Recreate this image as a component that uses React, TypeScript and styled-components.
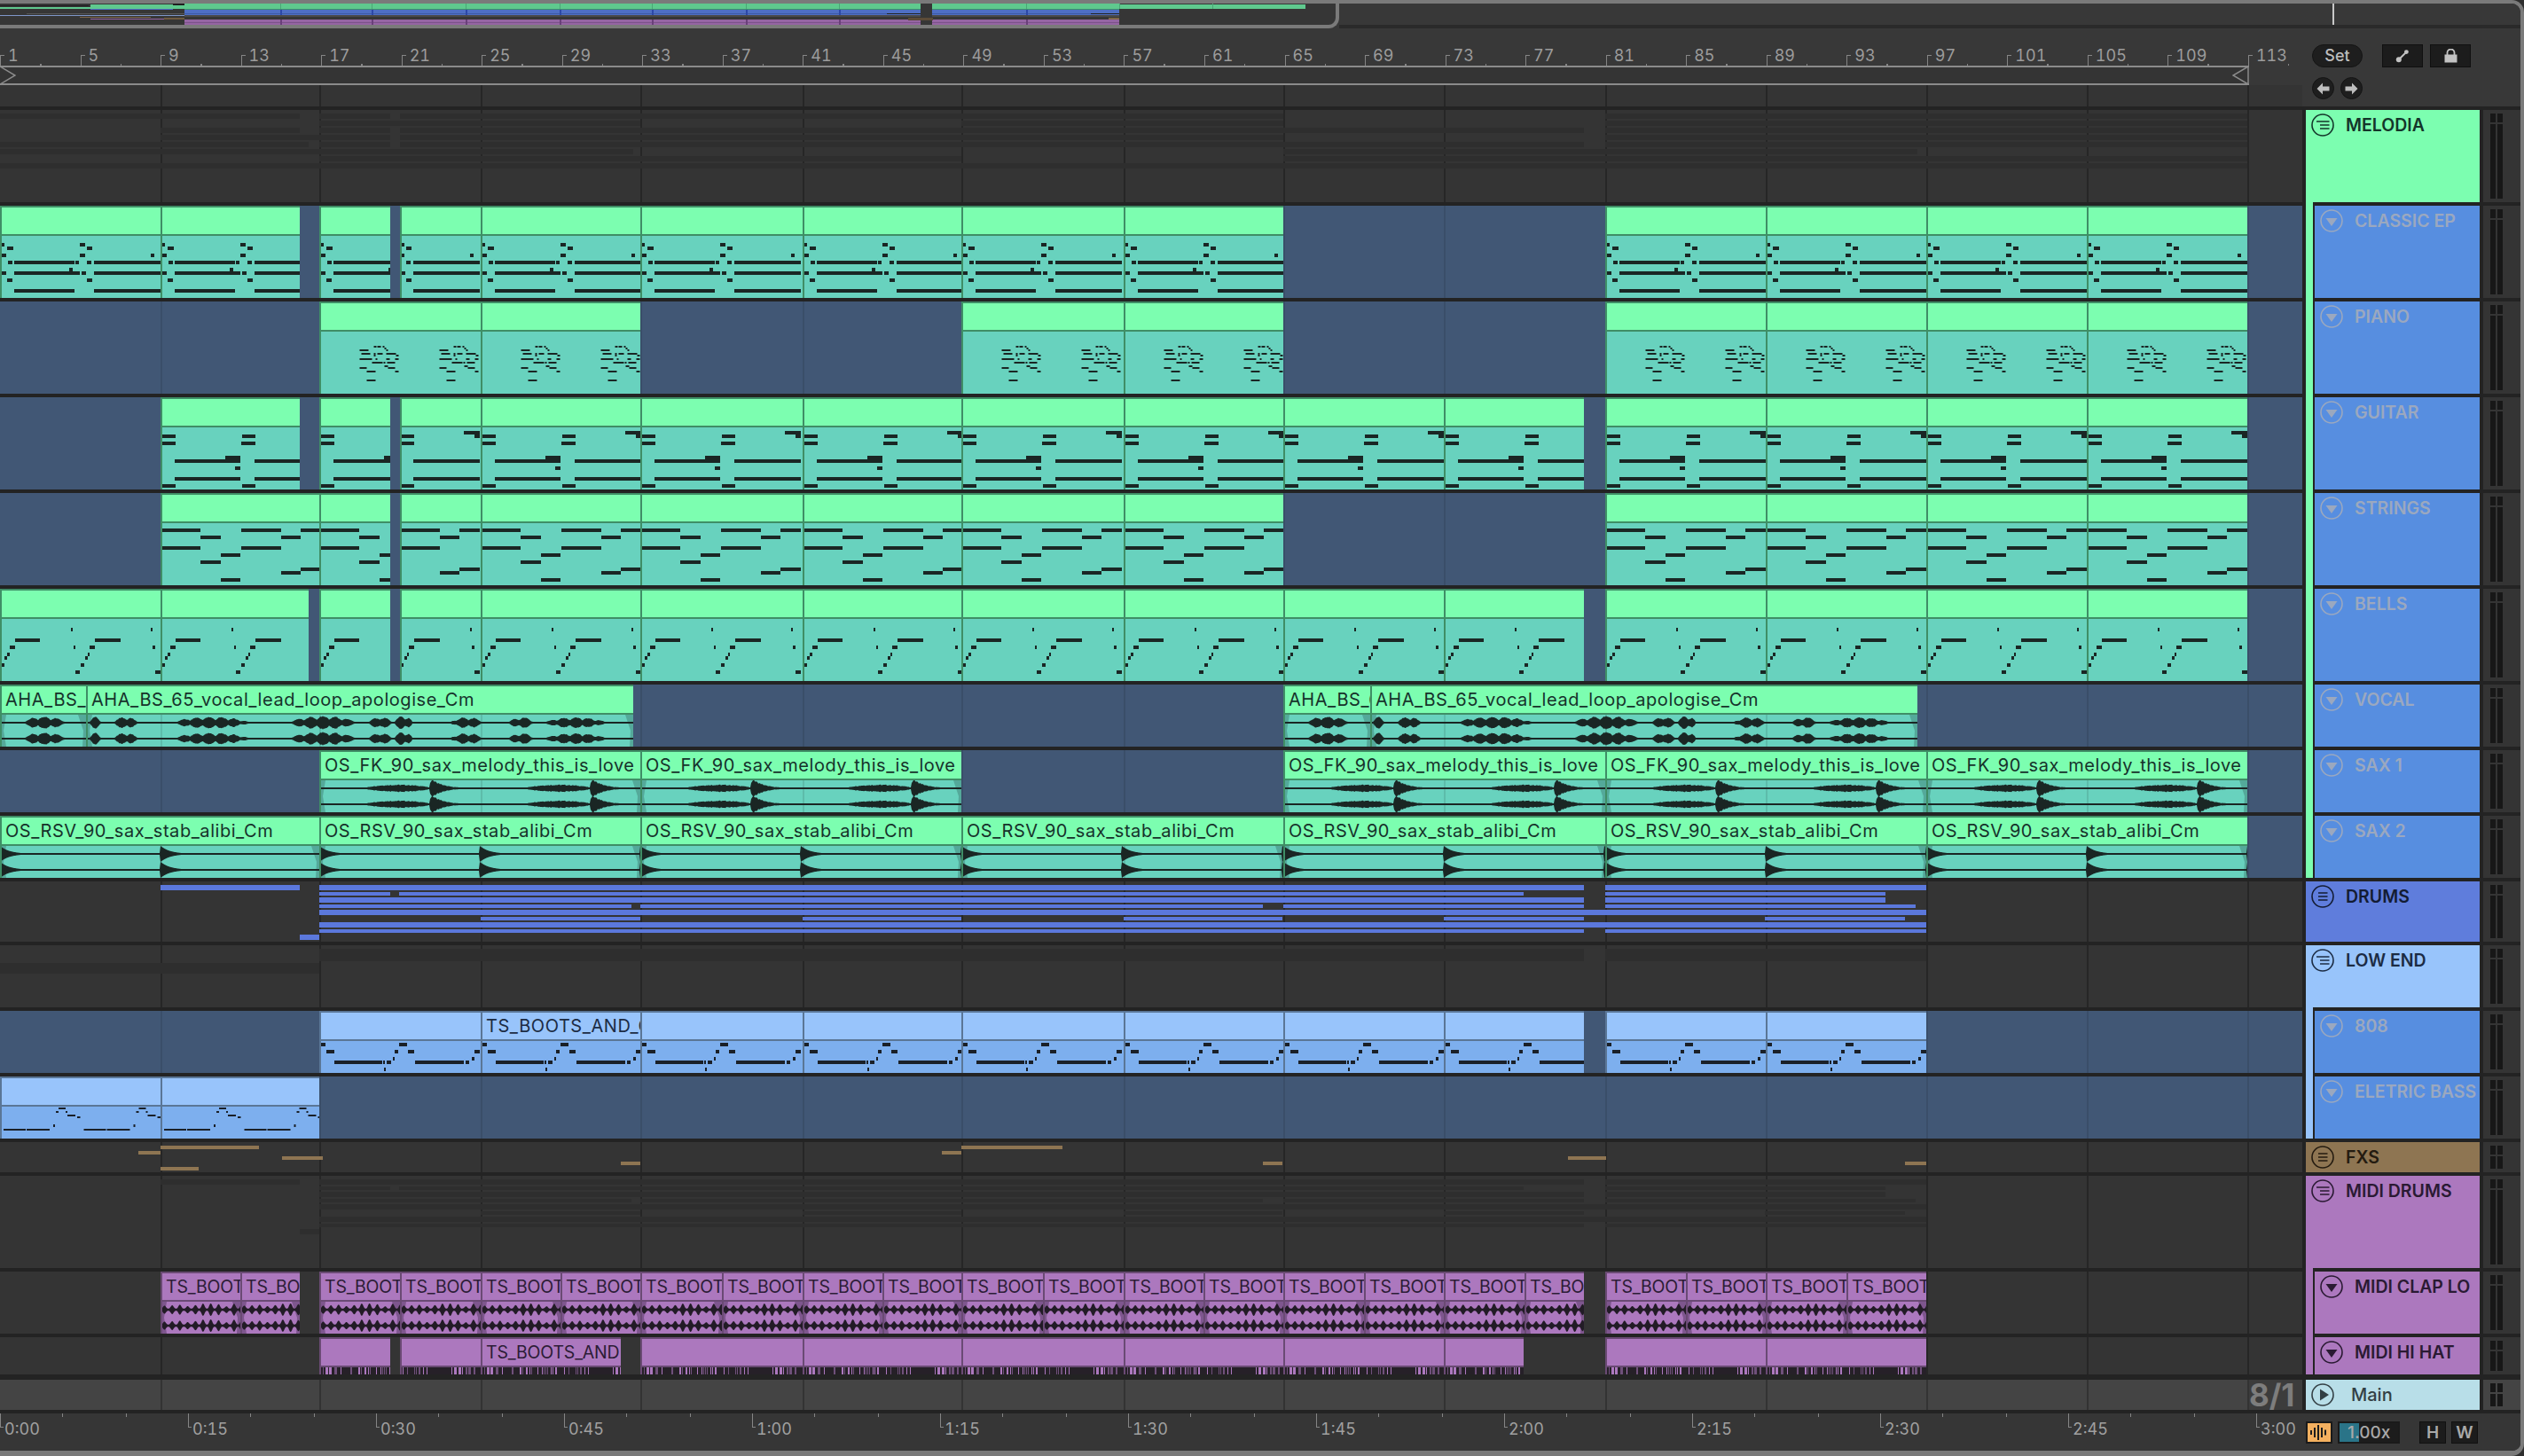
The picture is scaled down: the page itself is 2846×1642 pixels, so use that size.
import styled, { createGlobalStyle } from "styled-components";

//DATA
const GRID = [0, 181, 360, 542, 722, 905, 1084, 1267, 1447, 1628, 1810, 1991, 2172, 2353, 2534];
const GRID_HALF = GRID.slice(0, -1).flatMap((g, i) => [g, Math.round((g + GRID[i + 1]) / 2)]).concat(2534);

type Range = [number, number];
type Note = [number, number, number, number?];
type Clip = { x: number; w: number };

const split = (ranges: Range[], cuts: number[] = GRID): Clip[] =>
  ranges.flatMap(([a, b]) => {
    const marks = [a, ...cuts.filter((c) => c > a && c < b), b];
    return marks.slice(0, -1).map((m, i) => ({ x: m, w: marks[i + 1] - m }));
  });

const originOf = (x: number) => [...GRID].reverse().find((g) => g <= x) ?? 0;
const noise = (i: number) => {
  const s = Math.sin(i * 12.9898) * 43758.5453;
  return s - Math.floor(s);
};

// a label only needs the characters that show inside its clip
const fitLabel = (label: string, w: number) => label.slice(0, Math.ceil((w - 6) / 11.4));

const line = (y: number, pairs: number[], h = 4): Note[] => {
  const out: Note[] = [];
  for (let i = 0; i < pairs.length; i += 2) out.push([y, pairs[i], pairs[i + 1], h]);
  return out;
};

const CLASSIC_NOTES: Note[] = [
  ...line(8, [0, 5, 90, 96]),
  ...line(12, [8, 15, 98, 104]),
  ...line(20, [0, 7, 90, 96, 170, 174]),
  ...line(28, [9, 14, 16, 84, 85, 89, 98, 103, 106, 181]),
  ...line(36, [78, 82]),
  ...line(40, [0, 7, 16, 90, 92, 97, 106, 181]),
  ...line(48, [8, 14, 98, 104]),
  ...line(60, [16, 84, 106, 181]),
];

const PIANO_CLUSTER: Note[] = [
  ...line(16, [16, 19, 20, 24, 26, 28], 2),
  ...line(18, [28, 30], 2),
  ...line(20, [0, 10, 30, 32], 2),
  ...line(24, [2, 12, 16, 18, 20, 26, 30, 41], 2),
  ...line(26, [16, 18, 41, 44], 2),
  ...line(30, [0, 14, 18, 20, 30, 34, 40, 44], 2),
  ...line(34, [14, 26, 27, 29, 31, 40], 2),
  ...line(38, [28, 32], 2),
  ...line(40, [0, 8, 32, 40], 2),
  ...line(44, [8, 18, 40, 44], 2),
  ...line(54, [8, 18], 2),
];
const PIANO_NOTES: Note[] = [45.5, 135.5].flatMap((o) =>
  PIANO_CLUSTER.map(([y, a, b, h]) => [y, a + o, b + o, h] as Note),
);

const GUITAR_NOTES: Note[] = [
  ...line(4, [163, 181]),
  ...line(8, [2, 17, 92, 107, 175, 181]),
  ...line(16, [2, 17, 91, 107]),
  ...line(32, [73, 90], 8),
  ...line(36, [16, 90, 106, 181]),
  ...line(44, [84, 90]),
  ...line(56, [16, 90, 106, 181]),
  ...line(64, [2, 17, 92, 107]),
];

const STRINGS_NOTES: Note[] = [
  ...line(6, [0, 45, 91, 136, 158, 181]),
  ...line(14, [45, 68, 136, 158]),
  ...line(26, [0, 45, 91, 136]),
  ...line(34, [68, 90]),
  ...line(42, [45, 68]),
  ...line(50, [158, 181]),
  ...line(54, [136, 158]),
  ...line(62, [68, 90]),
];

const BELLS_NOTES: Note[] = [
  ...line(10, [80, 82, 170, 172]),
  ...line(22, [17, 45, 107, 136]),
  ...line(30, [11, 17, 83, 85, 101, 107, 172, 175]),
  ...line(38, [8, 11, 99, 101]),
  ...line(42, [5, 8, 96, 99]),
  ...line(50, [1, 5, 91, 95]),
  ...line(58, [85, 90, 175, 181]),
];

const SUB_NOTES: Note[] = [
  ...line(2, [1, 7, 90, 99]),
  ...line(10, [8, 17, 85, 89, 100, 107, 175, 181]),
  ...line(18, [83, 85, 172, 175]),
  ...line(22, [17, 71, 72, 74, 76, 81, 108, 163, 165, 169]),
  ...line(30, [73, 75]),
];

const BASS_NOTES: Note[] = [0, 90.5].flatMap((o) =>
  [
    ...line(1, [66, 74], 2),
    ...line(5, [63, 66, 74, 76], 2),
    ...line(9, [76, 85], 2),
    ...line(11, [87, 90.5], 2),
    ...line(20, [60, 62], 3),
    ...line(25, [4, 29, 30, 56], 2),
  ].map(([y, a, b, h]) => [y, a + o, b + o, h] as Note),
);

const CLASSIC_R: Range[] = [[0, 338], [360, 440], [451, 1447], [1810, 2534]];
const PIANO_R: Range[] = [[360, 722], [1084, 1447], [1810, 2534]];
const GUITAR_R: Range[] = [[181, 338], [360, 440], [451, 1786], [1810, 2534]];
const STRINGS_R: Range[] = [[181, 440], [451, 1447], [1810, 2534]];
const BELLS_R: Range[] = [[0, 348], [360, 440], [451, 1786], [1810, 2534]];
const VOCAL_R: Range[] = [[0, 714], [1447, 2162]];
const SAX1_R: Range[] = [[360, 1084], [1447, 2534]];
const SAX2_R: Range[] = [[0, 2534]];
const SUB_R: Range[] = [[360, 1786], [1810, 2172]];
const BASS_R: Range[] = [[0, 360]];

const DRUM_ROWS: [number, number, Range[]][] = [
  [4, 6, [[181, 338], [360, 1786], [1810, 2172]]],
  [12, 4, [[360, 440], [450, 1718], [1810, 2126]]],
  [18, 6, [[360, 1786], [1810, 2126]]],
  [26, 4, [[360, 712], [722, 1424], [1447, 1786], [1810, 2160]]],
  [32, 6, [[360, 2172]]],
  [40, 4, [[542, 722], [905, 1084], [1267, 1446], [1628, 1786], [1990, 2148]]],
  [46, 6, [[360, 2172]]],
  [54, 4, [[360, 1786], [1810, 2172]]],
  [60, 6, [[338, 360]]],
];

const MELODIA_ROWS: [number, number, Range[]][] = [
  [4, 6, CLASSIC_R],
  [12, 6, PIANO_R],
  [20, 6, GUITAR_R],
  [28, 6, STRINGS_R],
  [36, 6, BELLS_R],
  [44, 6, VOCAL_R],
  [52, 6, SAX1_R],
  [60, 6, SAX2_R],
];

const LOW_END_ROWS: [number, number, Range[]][] = [
  [4, 14, SUB_R],
  [20, 12, BASS_R],
];

const FX_ROWS: [number, number, Range[]][] = [
  [4, 4, [[181, 292], [1084, 1198]]],
  [10, 4, [[156, 181], [1062, 1084]]],
  [16, 4, [[318, 364], [1768, 1811]]],
  [22, 4, [[700, 722], [1424, 1446], [2148, 2172]]],
  [28, 4, [[181, 224]]],
];

const GREEN = { title: "#7cfeb0", body: "#68d2be", edge: "#3f8e66", ink: "#16322b", wave: "#1a2624", fade: "rgba(60,120,110,.45)" };
const BLUE = { title: "#98c4fb", body: "#7dafee", edge: "#5a7696", ink: "#1c2c44", wave: "#1a2028", fade: "rgba(60,90,130,.4)" };
const PURPLE = { title: "#ac78be", body: "#ac78be", edge: "#6a4a74", ink: "#2c1c36", wave: "#221b26", fade: "rgba(70,45,85,.45)" };

const VOCAL_BURSTS: [number, number, number][] = [
  [26, 75, 7.5], [101, 114, 7], [128, 155, 7], [195, 281, 7], [327, 402, 8], [416, 442, 7],
  [445, 465, 8.5], [508, 545, 6.5], [574, 602, 6.5], [614, 683, 6.5],
];
const vocalAmp = (x: number) => {
  for (const [a, b, p] of VOCAL_BURSTS) {
    if (x >= a && x <= b) {
      const t = (x - a) / (b - a);
      const pulse = 0.45 + 0.55 * Math.abs(Math.sin(x * 0.22));
      return Math.max(1, p * Math.pow(Math.sin(Math.PI * t), 0.6) * pulse * (0.8 + 0.2 * noise(Math.floor(x))));
    }
  }
  return 1;
};
const saxMelodyAmp = (x: number) => {
  const r = x % 181;
  if (r >= 52 && r < 125) return Math.max(1, 4.4 * Math.pow(Math.sin((Math.PI * (r - 52)) / 73), 0.5) * (0.7 + 0.3 * noise(Math.floor(r))));
  if (r >= 125 && r < 170) return Math.max(1, 8.8 * Math.exp(-(r - 130) / 13) * (0.75 + 0.25 * noise(Math.floor(r))) * Math.min(1, (r - 123) / 4));
  return 1;
};
const stabAmp = (x: number) => Math.max(1, 9 * Math.exp(-(x % 181) / 11));
const clapAmp = (x: number) => {
  const phase = x * 0.36;
  const spike = Math.pow(Math.abs(Math.sin(phase)), 3);
  const height = 0.35 + 0.65 * noise(Math.floor(phase / Math.PI) + 4);
  const swell = 1 + 0.5 * Math.exp(-Math.pow((x - 46) / 7, 2));
  return Math.max(1.2, 1.2 + 6.4 * spike * height * swell * (0.85 + 0.15 * noise(Math.floor(x))));
};

const STRIPES: Note[] = (() => {
  const out: Note[] = [];
  let x = 0;
  while (x < 181) {
    const w = 1 + Math.floor(noise(x + 3) * 3);
    if (noise(x * 2 + 7) > 0.42) out.push([0, x, x + w, noise(x + 11) > 0.5 ? 1 : 0.55]);
    x += w + 1 + Math.floor(noise(x + 5) * 3);
  }
  return out;
})();

//DRAWINGS
const NoteRoll = ({ clip, height, notes, color }: { clip: Clip; height: number; notes: Note[]; color: string }) => {
  const shift = clip.x + 2 - originOf(clip.x);
  return (
    <svg width={clip.w - 2} height={height} style={{ display: "block" }}>
      <g transform={`translate(${-shift} 0)`} fill={color}>
        {notes.map(([y, a, b, h], i) => (
          <rect key={i} x={a} y={y} width={b - a} height={h ?? 4} />
        ))}
      </g>
    </svg>
  );
};

const Waveform = ({
  clip,
  origin,
  amp,
  wave,
  fade,
}: {
  clip: Clip;
  origin: number;
  amp: (x: number) => number;
  wave: string;
  fade: string;
}) => {
  const w = clip.w - 2;
  const h = 36;
  const shift = clip.x + 2 - origin;
  const channel = (c: number) => {
    let top = "";
    let bottom = "";
    for (let x = 0; x <= w; x += 1) {
      const a = amp(x + shift);
      top += `${x === 0 ? "M" : "L"}${x} ${(c - a).toFixed(1)}`;
      bottom = `L${x} ${(c + a).toFixed(1)}` + bottom;
    }
    return top + bottom + "Z";
  };
  return (
    <svg width={w} height={h} style={{ display: "block" }}>
      <path d={`M0 0L5 0L2 18L5 36L0 36Z M${w - 9} 0L${w} 0L${w} 36L${w - 4} 36L${w - 3} 18Z`} fill={fade} />
      {GRID.filter((g) => g > clip.x + 2 && g < clip.x + clip.w).map((g) => (
        <rect key={g} x={g - clip.x - 2} y={0} width={2} height={h} fill="rgba(0,0,0,.1)" />
      ))}
      <path d={channel(9) + channel(27)} fill={wave} />
    </svg>
  );
};

const Barcode = ({ clip }: { clip: Clip }) => {
  const shift = clip.x + 2 - originOf(clip.x);
  return (
    <svg width={clip.w - 2} height={8} style={{ display: "block" }}>
      <rect width={clip.w} height={8} fill="#262028" />
      <g transform={`translate(${-shift} 0)`} fill="#ac78be">
        {STRIPES.map(([, a, b, o], i) => (
          <rect key={i} x={a} width={b - a} height={8} opacity={o} />
        ))}
      </g>
    </svg>
  );
};

const FoldIcon = ({ open }: { open?: boolean }) => (
  <IconSvg viewBox="0 0 26 26">
    <circle cx="13" cy="13" r="12" fill="none" stroke="currentColor" strokeWidth="1.6" />
    {open ? (
      <path d="M6 9H20.5M10 13H20.5M10 17H20.5" stroke="currentColor" strokeWidth="1.6" />
    ) : (
      <path d="M8 9H18.5M8 13H18.5M8 17H18.5" stroke="currentColor" strokeWidth="1.6" />
    )}
  </IconSvg>
);

const ArmIcon = () => (
  <IconSvg viewBox="0 0 26 26">
    <circle cx="13" cy="13" r="12" fill="none" stroke="currentColor" strokeWidth="1.6" />
    <path d="M6.5 10H19.5L13 19Z" fill="currentColor" />
  </IconSvg>
);

const PlayIcon = () => (
  <IconSvg viewBox="0 0 26 26">
    <circle cx="13" cy="13" r="12" fill="none" stroke="currentColor" strokeWidth="1.6" />
    <path d="M10 6.5V19.5L20 13Z" fill="currentColor" />
  </IconSvg>
);

const ArrowIcon = ({ right }: { right?: boolean }) => (
  <svg width="15" height="14" viewBox="0 0 15 14" style={{ transform: right ? "scaleX(-1)" : undefined }}>
    <path d="M7 0.5L0.5 7L7 13.5V9.5H14.5V4.5H7Z" fill="#bdbdbd" />
  </svg>
);

const OverviewMap = () => {
  const main: Range[] = [[208, 1038], [1051, 1262]];
  const ticks = [316, 419, 525, 631, 735, 841, 946, 1157];
  return (
    <svg width="1506" height="24" style={{ display: "block" }}>
      <rect x="0" y="2" width="100" height="1" fill="#1f1f1f" />
      <rect x="0" y="4" width="102" height="2" fill="#5fc98e" />
      <rect x="102" y="1" width="106" height="5" fill="#5fc98e" />
      <rect x="102" y="6" width="93" height="1" fill="#5070c8" />
      <rect x="195" y="0" width="13" height="2" fill="#1f1f1f" />
      <rect x="0" y="13" width="208" height="1" fill="#7f97c9" />
      <rect x="30" y="11" width="178" height="1" fill="#555" />
      <rect x="90" y="15" width="80" height="1" fill="#7d6648" />
      <rect x="102" y="17" width="93" height="1" fill="#9565a3" />
      <rect x="185" y="16" width="23" height="2" fill="#6e5a40" />
      <rect x="1262" y="1" width="210" height="5" fill="#5fc98e" />
      {main.map(([a, b]) => (
        <g key={a}>
          <rect x={a} y="0" width={b - a} height="6" fill="#5fc98e" />
          <rect x={a} y="6" width={b - a} height="1" fill="#3f8e6c" />
          <rect x={a} y="7" width={b - a} height="6" fill="#4e6fc4" />
          <rect x={a} y="11" width={b - a} height="1" fill="#3d5aa6" />
          <rect x={a} y="13" width={b - a} height="2" fill="#4a4a4a" />
          <rect x={a} y="18" width={b - a} height="6" fill="#9565a3" />
          <rect x={a} y="21" width={b - a} height="1" fill="#7a5389" />
        </g>
      ))}
      {ticks.map((t) => (
        <g key={t}>
          <rect x={t} y="0" width="1" height="6" fill="#4aa676" />
          <rect x={t} y="7" width="2" height="6" fill="#2c48a8" />
          <rect x={t} y="18" width="2" height="6" fill="#6a3f7a" />
        </g>
      ))}
      <rect x="1262" y="0" width="1" height="6" fill="#4aa676" />
      <rect x="1367" y="0" width="1" height="6" fill="#4aa676" />
      <rect x="1000" y="11" width="38" height="1" fill="#222" />
      <rect x="1230" y="11" width="32" height="1" fill="#222" />
      <rect x="1024" y="16" width="28" height="3" fill="#5c4b38" />
      <rect x="1250" y="16" width="12" height="2" fill="#7d6648" />
    </svg>
  );
};

//REACT
const Lane = ({
  height,
  tone = "dark",
  rows,
  barColor,
  children,
}: {
  height: number;
  tone?: "dark" | "blue" | "main";
  rows?: [number, number, Range[]][];
  barColor?: string;
  children?: React.ReactNode;
}) => (
  <LaneBox $height={height} $tone={tone}>
    {GRID.slice(1).map((g) => (
      <GridLine key={g} $x={g} $tone={tone} />
    ))}
    {rows?.flatMap(([top, h, ranges]) =>
      ranges.map(([a, b]) => <SummaryBar key={`${top}-${a}`} $x={a} $w={b - a} $top={top} $h={h} $color={barColor ?? "#2e2e2e"} />),
    )}
    {children}
  </LaneBox>
);

const MidiLane = ({ ranges, notes, palette = GREEN, bodyHeight = 70, cuts, labels }: any) => (
  <>
    {split(ranges, cuts).map((clip: Clip) => (
      <ClipBox key={clip.x} $x={clip.x} $w={clip.w} $edge={palette.edge}>
        <ClipTitle $bg={palette.title} $edge={palette.edge} $ink={palette.ink}>
          {labels?.[clip.x] ? fitLabel(labels[clip.x], clip.w) : null}
        </ClipTitle>
        <ClipBody $bg={palette.body}>
          <NoteRoll clip={clip} height={bodyHeight} notes={notes} color={palette.wave} />
        </ClipBody>
      </ClipBox>
    ))}
  </>
);

const AudioLane = ({ clips, label, amp, palette = GREEN, local, setOrigins }: any) => (
  <>
    {clips.map((clip: Clip) => {
      const origin = setOrigins ? setOrigins(clip) : local ? clip.x : originOf(clip.x);
      return (
        <ClipBox key={clip.x} $x={clip.x} $w={clip.w} $edge={palette.edge}>
          <ClipTitle $bg={palette.title} $edge={palette.edge} $ink={palette.ink} $tight={local}>
            {fitLabel(label, clip.w)}
          </ClipTitle>
          <ClipBody $bg={palette.body}>
            <Waveform clip={clip} origin={origin} amp={amp} wave={palette.wave} fade={palette.fade} />
          </ClipBody>
        </ClipBox>
      );
    })}
  </>
);

const HEADER_INK = { green: "#14352a", blue: "#9ba8bf", drums: "#131c33", low: "#1c2c44", fx: "#241b10", midi: "#2a1a33" };

const TrackHeader = ({ name, color, ink, height, fold, openFold }: any) => (
  <HeaderRow $bg={color} $ink={ink} $height={height}>
    {fold ? <FoldIcon open={openFold} /> : <ArmIcon />}
    <TrackName>{name}</TrackName>
  </HeaderRow>
);

const ChildTrack = ({ name, color, ink, height }: any) => (
  <ChildRow $bg={color} $ink={ink} $height={height + 4}>
    <ArmIcon />
    <TrackName>{name}</TrackName>
  </ChildRow>
);

const METER_HEIGHTS = [104, 104, 104, 104, 104, 104, 70, 70, 70, 68, 70, 70, 70, 34, 104, 70, 42];

const App = () => {
  const barLabels = Array.from({ length: 29 }, (_, i) => i * 4 + 1);
  const times = Array.from({ length: 13 }, (_, i) => `${Math.floor((i * 15) / 60)}:${String((i * 15) % 60).padStart(2, "0")}`);
  const vocalClips: Clip[] = [
    { x: 0, w: 97 },
    { x: 97, w: 617 },
    { x: 1447, w: 98 },
    { x: 1545, w: 617 },
  ];
  const sax1Clips: Clip[] = [
    { x: 360, w: 362 },
    { x: 722, w: 362 },
    { x: 1447, w: 363 },
    { x: 1810, w: 362 },
    { x: 2172, w: 362 },
  ];
  const sax2Clips: Clip[] = [
    { x: 0, w: 360 },
    { x: 360, w: 362 },
    { x: 722, w: 362 },
    { x: 1084, w: 363 },
    { x: 1447, w: 363 },
    { x: 1810, w: 362 },
    { x: 2172, w: 362 },
  ];
  const clapClips = split([[181, 338], [360, 1786], [1810, 2172]], GRID_HALF);
  const hatClips = split([[360, 440], [451, 700], [722, 1718], [1810, 2172]]);

  return (
    <>
      <GlobalStyle />
      <Window>
        <TopStrip>
          <OverviewFrame>
            <OverviewMap />
          </OverviewFrame>
          <TopRest>
            <Playhead />
          </TopRest>
        </TopStrip>

        <RulerBar>
          <RulerColumn>
            <BarRow>
              {barLabels.map((b) => (
                <BarCell key={b}>{b}</BarCell>
              ))}
            </BarRow>
            <LoopBrace>
              <svg width="18" height="20" style={{ display: "block" }}>
                <path d="M0 0L17 10L0 20" fill="none" stroke="#8b8b8b" strokeWidth="1.5" />
              </svg>
              <svg width="19" height="20" style={{ display: "block" }}>
                <path d="M18 0L1 10L18 20Z" fill="none" stroke="#8b8b8b" strokeWidth="1.5" />
              </svg>
            </LoopBrace>
            <RulerStub>
              {GRID.slice(1).map((g) => (
                <GridLine key={g} $x={g} $tone="dark" />
              ))}
            </RulerStub>
          </RulerColumn>
          <ControlColumn>
            <ControlRow>
              <SetPill>Set</SetPill>
              <SquareGroup>
                <SquareButton>
                  <svg width="16" height="16" viewBox="0 0 16 16">
                    <path d="M4 12L12 4" stroke="#c2c2c2" strokeWidth="2" />
                    <circle cx="3.8" cy="12.2" r="3" fill="#c2c2c2" />
                    <circle cx="12.4" cy="3.6" r="2.4" fill="#c2c2c2" />
                  </svg>
                </SquareButton>
                <SquareButton>
                  <svg width="15" height="16" viewBox="0 0 15 16">
                    <path d="M3.5 7V4.5a4 4 0 0 1 8 0V7" fill="none" stroke="#c2c2c2" strokeWidth="1.8" />
                    <rect x="0.5" y="6.5" width="14" height="9" fill="#c2c2c2" />
                  </svg>
                </SquareButton>
              </SquareGroup>
            </ControlRow>
            <ControlRow>
              <ArrowButton>
                <ArrowIcon />
              </ArrowButton>
              <ArrowButton>
                <ArrowIcon right />
              </ArrowButton>
            </ControlRow>
          </ControlColumn>
        </RulerBar>

        <TrackArea>
          <LaneColumn>
            <Lane height={104} rows={MELODIA_ROWS} />
            <Lane height={104} tone="blue">
              <MidiLane ranges={CLASSIC_R} notes={CLASSIC_NOTES} />
            </Lane>
            <Lane height={104} tone="blue">
              <MidiLane ranges={PIANO_R} notes={PIANO_NOTES} />
            </Lane>
            <Lane height={104} tone="blue">
              <MidiLane ranges={GUITAR_R} notes={GUITAR_NOTES} />
            </Lane>
            <Lane height={104} tone="blue">
              <MidiLane ranges={STRINGS_R} notes={STRINGS_NOTES} />
            </Lane>
            <Lane height={104} tone="blue">
              <MidiLane ranges={BELLS_R} notes={BELLS_NOTES} />
            </Lane>
            <Lane height={70} tone="blue">
              <AudioLane
                clips={vocalClips}
                label="AHA_BS_65_vocal_lead_loop_apologise_Cm"
                amp={vocalAmp}
                setOrigins={(c: Clip) => (c.x < 1000 ? 0 : 1447)}
              />
            </Lane>
            <Lane height={70} tone="blue">
              <AudioLane clips={sax1Clips} label="OS_FK_90_sax_melody_this_is_love_Cm" amp={saxMelodyAmp} />
            </Lane>
            <Lane height={70} tone="blue">
              <AudioLane clips={sax2Clips} label="OS_RSV_90_sax_stab_alibi_Cm" amp={stabAmp} />
            </Lane>
            <Lane height={68} rows={DRUM_ROWS} barColor="#5b78dc" />
            <Lane height={70} rows={LOW_END_ROWS} />
            <Lane height={70} tone="blue">
              <MidiLane ranges={SUB_R} notes={SUB_NOTES} palette={BLUE} bodyHeight={36} labels={{ 542: "TS_BOOTS_AND_CATS" }} />
            </Lane>
            <Lane height={70} tone="blue">
              <MidiLane ranges={BASS_R} notes={BASS_NOTES} palette={BLUE} bodyHeight={36} />
            </Lane>
            <Lane height={34} rows={FX_ROWS} barColor="#8e7552" />
            <Lane height={104} rows={DRUM_ROWS} />
            <Lane height={70}>
              <AudioLane clips={clapClips} label="TS_BOOTS_AND_CATS_clap" amp={clapAmp} palette={PURPLE} local />
            </Lane>
            <Lane height={42}>
              {hatClips.map((clip) => (
                <ClipBox key={clip.x} $x={clip.x} $w={clip.w} $edge={PURPLE.edge}>
                  <ClipTitle $bg={PURPLE.title} $edge={PURPLE.edge} $ink={PURPLE.ink} $tight>
                    {clip.x === 542 ? "TS_BOOTS_AND" : ""}
                  </ClipTitle>
                  <Barcode clip={clip} />
                </ClipBox>
              ))}
            </Lane>
            <MainGap />
            <Lane height={34} tone="main">
              <BeatBox>8/1</BeatBox>
            </Lane>
          </LaneColumn>

          <HeaderColumn>
            <FolderGroup $bg="#7cfeb0">
              <TrackHeader name="MELODIA" color="#7cfeb0" ink={HEADER_INK.green} height={104} fold openFold />
              <FolderChildren>
                {["CLASSIC EP", "PIANO", "GUITAR", "STRINGS", "BELLS"].map((n) => (
                  <ChildTrack key={n} name={n} color="#578ee0" ink={HEADER_INK.blue} height={104} />
                ))}
                {["VOCAL", "SAX 1", "SAX 2"].map((n) => (
                  <ChildTrack key={n} name={n} color="#578ee0" ink={HEADER_INK.blue} height={70} />
                ))}
              </FolderChildren>
            </FolderGroup>
            <TrackHeader name="DRUMS" color="#5f7ddc" ink={HEADER_INK.drums} height={68} fold />
            <FolderGroup $bg="#98c4fb">
              <TrackHeader name="LOW END" color="#98c4fb" ink={HEADER_INK.low} height={70} fold openFold />
              <FolderChildren>
                <ChildTrack name="808" color="#578ee0" ink={HEADER_INK.blue} height={70} />
                <ChildTrack name="ELETRIC BASS" color="#578ee0" ink={HEADER_INK.blue} height={70} />
              </FolderChildren>
            </FolderGroup>
            <TrackHeader name="FXS" color="#8e7552" ink={HEADER_INK.fx} height={34} fold />
            <FolderGroup $bg="#ac78be">
              <TrackHeader name="MIDI DRUMS" color="#ac78be" ink={HEADER_INK.midi} height={104} fold openFold />
              <FolderChildren>
                <ChildTrack name="MIDI CLAP LO" color="#ac78be" ink={HEADER_INK.midi} height={70} />
                <ChildTrack name="MIDI HI HAT" color="#ac78be" ink={HEADER_INK.midi} height={42} />
              </FolderChildren>
            </FolderGroup>
            <MainGap />
            <MainHeader>
              <PlayIcon />
              <MainName>Main</MainName>
            </MainHeader>
          </HeaderColumn>

          <MeterColumn>
            {METER_HEIGHTS.map((h, i) => (
              <MeterCell key={i} $height={h}>
                <MeterBar>
                  <MeterCap />
                  <MeterFill />
                </MeterBar>
                <MeterBar>
                  <MeterCap />
                  <MeterFill />
                </MeterBar>
              </MeterCell>
            ))}
            <MainGap />
            <MeterCell $height={34} $main>
              <MeterBar>
                <MeterCap />
                <MeterFill />
              </MeterBar>
              <MeterBar>
                <MeterCap />
                <MeterFill />
              </MeterBar>
            </MeterCell>
          </MeterColumn>
        </TrackArea>

        <Footer>
          <TimeRow>
            {times.map((t) => (
              <TimeCell key={t}>{t}</TimeCell>
            ))}
          </TimeRow>
          <FooterControls>
            <FollowButton>
              <svg width="22" height="17" viewBox="0 0 22 17">
                <path d="M2 6V11M6 3V14M10 0V17M14 3V14M18 5.5V11.5" stroke="#1d1d1d" strokeWidth="2" />
              </svg>
            </FollowButton>
            <ZoomField>1.00x</ZoomField>
            <LetterGroup>
              <LetterButton>H</LetterButton>
              <LetterButton>W</LetterButton>
            </LetterGroup>
          </FooterControls>
        </Footer>
      </Window>
    </>
  );
};

//STYLED-COMPONENTS
const GlobalStyle = createGlobalStyle`
  html, body {
    margin: 0;
    padding: 0;
    background: #2e2e2e;
  }
  * {
    box-sizing: border-box;
  }
`;

const Window = styled.div`
  width: 2846px;
  height: 1642px;
  display: flex;
  flex-direction: column;
  overflow: hidden;
  background: #232323;
  border: solid #7a7a7a;
  border-width: 4px 4px 6px 0;
  border-radius: 0 14px 14px 0;
  font-family: Inter, "Liberation Sans", sans-serif;
`;

const TopStrip = styled.div`
  display: flex;
  height: 28px;
  flex: none;
  background: #383838;
`;

const OverviewFrame = styled.div`
  width: 1510px;
  height: 28px;
  flex: none;
  background: #363636;
  border: solid #7a7a7a;
  border-width: 0 4px 4px 0;
  border-radius: 0 0 12px 0;
  overflow: hidden;
`;

const TopRest = styled.div`
  flex: 1;
  position: relative;
  border-bottom: 4px solid #2a2a2a;
`;

const Playhead = styled.div`
  position: absolute;
  left: 1120px;
  top: 0;
  bottom: 0;
  width: 2px;
  background: #c8c8c8;
`;

const RulerBar = styled.div`
  display: flex;
  height: 88px;
  flex: none;
  background: #383838;
`;

const RulerColumn = styled.div`
  width: 2596px;
  flex: none;
  display: flex;
  flex-direction: column;
`;

const BarRow = styled.div`
  display: flex;
  height: 42px;
  overflow: hidden;
`;

const BarCell = styled.div`
  position: relative;
  flex: none;
  width: 90.54px;
  padding: 21px 0 0 9px;
  font-size: 18px;
  line-height: 20px;
  color: #9c9c9c;
  font-variant-numeric: tabular-nums;

  &::before {
    content: "";
    position: absolute;
    left: 0;
    top: 30px;
    bottom: 0;
    width: 4px;
    border: solid #858585;
    border-width: 1.5px 0 0 1.5px;
  }

  &::after {
    content: "";
    position: absolute;
    left: 45px;
    bottom: 0;
    width: 1.5px;
    height: 2px;
    background: #858585;
  }
`;

const LoopBrace = styled.div`
  width: 2536px;
  height: 22px;
  flex: none;
  display: flex;
  align-items: center;
  justify-content: space-between;
  border: solid #8b8b8b;
  border-width: 2px 0;
  background: #343434;
`;

const RulerStub = styled.div`
  position: relative;
  height: 24px;
  flex: none;
  width: 2596px;
  background: #343434;
`;

const ControlColumn = styled.div`
  flex: 1;
  padding: 18px 0 0 11px;
  display: flex;
  flex-direction: column;
  gap: 11px;
`;

const ControlRow = styled.div`
  display: flex;
  align-items: center;
  gap: 7px;
`;

const SetPill = styled.div`
  width: 57px;
  height: 26px;
  border-radius: 13px;
  background: #1e1e1e;
  border: 1px solid #141414;
  color: #bdbdbd;
  font-size: 18px;
  font-weight: 500;
  line-height: 24px;
  text-align: center;
`;

const SquareGroup = styled.div`
  display: flex;
  gap: 8px;
  margin-left: 15px;
`;

const SquareButton = styled.div`
  width: 46px;
  height: 26px;
  display: flex;
  align-items: center;
  justify-content: center;
  background: #1c1c1c;
  border: 1px solid #101010;
`;

const ArrowButton = styled.div`
  width: 25px;
  height: 25px;
  display: flex;
  align-items: center;
  justify-content: center;
  border-radius: 50%;
  background: #1e1e1e;
  border: 1px solid #141414;
`;

const TrackArea = styled.div`
  display: flex;
  flex: none;
  height: 1466px;
  margin-top: 4px;
`;

const LaneColumn = styled.div`
  width: 2596px;
  flex: none;
  display: flex;
  flex-direction: column;
  gap: 4px;
`;

const LANE_BG = { dark: "#343434", blue: "#415775", main: "#444444" };
const LINE_BG = { dark: "#262626", blue: "#3a4e69", main: "#333333" };

const LaneBox = styled.div<{ $height: number; $tone: "dark" | "blue" | "main" }>`
  position: relative;
  flex: none;
  height: ${(p) => p.$height}px;
  overflow: hidden;
  background: ${(p) => LANE_BG[p.$tone]};
  display: flex;
  justify-content: flex-end;
`;

const GridLine = styled.i.attrs<{ $x: number; $tone: "dark" | "blue" | "main" }>((p) => ({
  style: { left: p.$x },
}))<{ $x: number; $tone: "dark" | "blue" | "main" }>`
  position: absolute;
  top: 0;
  bottom: 0;
  width: 2px;
  background: ${(p) => LINE_BG[p.$tone]};
`;

const SummaryBar = styled.i.attrs<{ $x: number; $w: number; $top: number; $h: number }>((p) => ({
  style: { left: p.$x, width: p.$w, top: p.$top, height: p.$h },
}))<{ $x: number; $w: number; $top: number; $h: number; $color: string }>`
  position: absolute;
  background: ${(p) => p.$color};
`;

const ClipBox = styled.div.attrs<{ $x: number; $w: number }>((p) => ({
  style: { left: p.$x, width: p.$w },
}))<{ $x: number; $w: number; $edge: string }>`
  position: absolute;
  top: 0;
  bottom: 0;
  display: flex;
  flex-direction: column;
  overflow: hidden;
  border: solid ${(p) => p.$edge};
  border-width: 2px 0 0 2px;
`;

const ClipTitle = styled.div<{ $bg: string; $edge: string; $ink: string; $tight?: boolean }>`
  height: 32px;
  flex: none;
  padding-left: 4px;
  background: ${(p) => p.$bg};
  border-bottom: 2px solid ${(p) => p.$edge};
  color: ${(p) => p.$ink};
  font-size: ${(p) => (p.$tight ? "19.5px" : "20px")};
  letter-spacing: ${(p) => (p.$tight ? "-0.2px" : "0.55px")};
  line-height: 31px;
  white-space: nowrap;
  overflow: hidden;
`;

const ClipBody = styled.div<{ $bg: string }>`
  flex: 1;
  background: ${(p) => p.$bg};
  overflow: hidden;
`;

const BeatBox = styled.div`
  position: relative;
  width: 60px;
  height: 100%;
  background: #3c3c3c;
  color: #7d7d7d;
  font-size: 35px;
  font-weight: 700;
  line-height: 34px;
  white-space: nowrap;
  overflow: hidden;
`;

const MainGap = styled.div`
  height: 0;
  flex: none;
  margin-top: -2px;
`;

const HeaderColumn = styled.div`
  width: 196px;
  flex: none;
  margin: 0 4px;
  display: flex;
  flex-direction: column;
  gap: 4px;
`;

const FolderGroup = styled.div<{ $bg: string }>`
  display: flex;
  flex-direction: column;
  background: ${(p) => p.$bg};
`;

const FolderChildren = styled.div`
  display: flex;
  flex-direction: column;
  margin-left: 8px;
  border-left: 2px solid #232323;
`;

const HeaderRow = styled.div<{ $bg: string; $ink: string; $height: number }>`
  height: ${(p) => p.$height}px;
  flex: none;
  display: flex;
  align-items: flex-start;
  gap: 13px;
  padding: 4px 0 0 6px;
  background: ${(p) => p.$bg};
  color: ${(p) => p.$ink};
`;

const ChildRow = styled(HeaderRow)`
  border-top: 4px solid #232323;
`;

const TrackName = styled.div`
  font-size: 19.5px;
  font-weight: 600;
  line-height: 26px;
  white-space: nowrap;
  overflow: hidden;
`;

const IconSvg = styled.svg`
  display: block;
  flex: none;
  width: 26px;
  height: 26px;
`;

const MainHeader = styled.div`
  height: 34px;
  flex: none;
  display: flex;
  align-items: center;
  gap: 19px;
  padding-left: 6px;
  background: #b8dee8;
  color: #333f44;
`;

const MainName = styled.div`
  font-size: 20px;
  font-weight: 500;
`;

const MeterColumn = styled.div`
  width: 42px;
  flex: none;
  display: flex;
  flex-direction: column;
  gap: 4px;
`;

const MeterCell = styled.div<{ $height: number; $main?: boolean }>`
  height: ${(p) => p.$height}px;
  flex: none;
  display: flex;
  gap: 2px;
  padding: 4px 0 4px 8px;
  background: ${(p) => (p.$main ? "#444444" : "#343434")};
`;

const MeterBar = styled.div`
  width: 6px;
  display: flex;
  flex-direction: column;
  gap: 2px;
`;

const MeterCap = styled.div`
  height: 10px;
  flex: none;
  background: #171717;
`;

const MeterFill = styled.div`
  flex: 1;
  background: #171717;
`;

const Footer = styled.div`
  display: flex;
  height: 42px;
  flex: none;
  margin-top: 4px;
  background: #363636;
`;

const TimeRow = styled.div`
  width: 2596px;
  flex: none;
  display: flex;
  overflow: hidden;
`;

const TimeCell = styled.div`
  position: relative;
  flex: none;
  width: 212px;
  padding: 7px 0 0 5px;
  font-size: 18px;
  line-height: 22px;
  color: #a0a0a0;
  font-variant-numeric: tabular-nums;

  &::before {
    content: "";
    position: absolute;
    left: 0;
    top: 0;
    width: 3px;
    height: 15px;
    border: solid #858585;
    border-width: 0 0 1.5px 1.5px;
  }

  &::after {
    content: "";
    position: absolute;
    left: 70px;
    top: 0;
    width: 71px;
    height: 4px;
    border: solid #858585;
    border-width: 0 1.5px;
  }
`;

const FooterControls = styled.div`
  flex: 1;
  display: flex;
  gap: 6px;
  padding: 9px 0 0 4px;
`;

const FollowButton = styled.div`
  width: 30px;
  height: 25px;
  display: flex;
  align-items: center;
  justify-content: center;
  background: #f4b05f;
  border: 2px solid #1a1a1a;
`;

const ZoomField = styled.div`
  width: 70px;
  height: 25px;
  padding-left: 9px;
  background: linear-gradient(90deg, #2a7488 22px, #1c1c1c 22px);
  border: 2px solid #1a1a1a;
  color: #a9a9a9;
  font-size: 19px;
  font-weight: 500;
  line-height: 21px;
`;

const LetterGroup = styled.div`
  display: flex;
  gap: 6px;
  margin-left: 16px;
`;

const LetterButton = styled.div`
  width: 30px;
  height: 25px;
  background: #1c1c1c;
  border: 1px solid #111111;
  color: #a9a9a9;
  font-size: 19px;
  font-weight: 600;
  line-height: 23px;
  text-align: center;
`;

export default App;
